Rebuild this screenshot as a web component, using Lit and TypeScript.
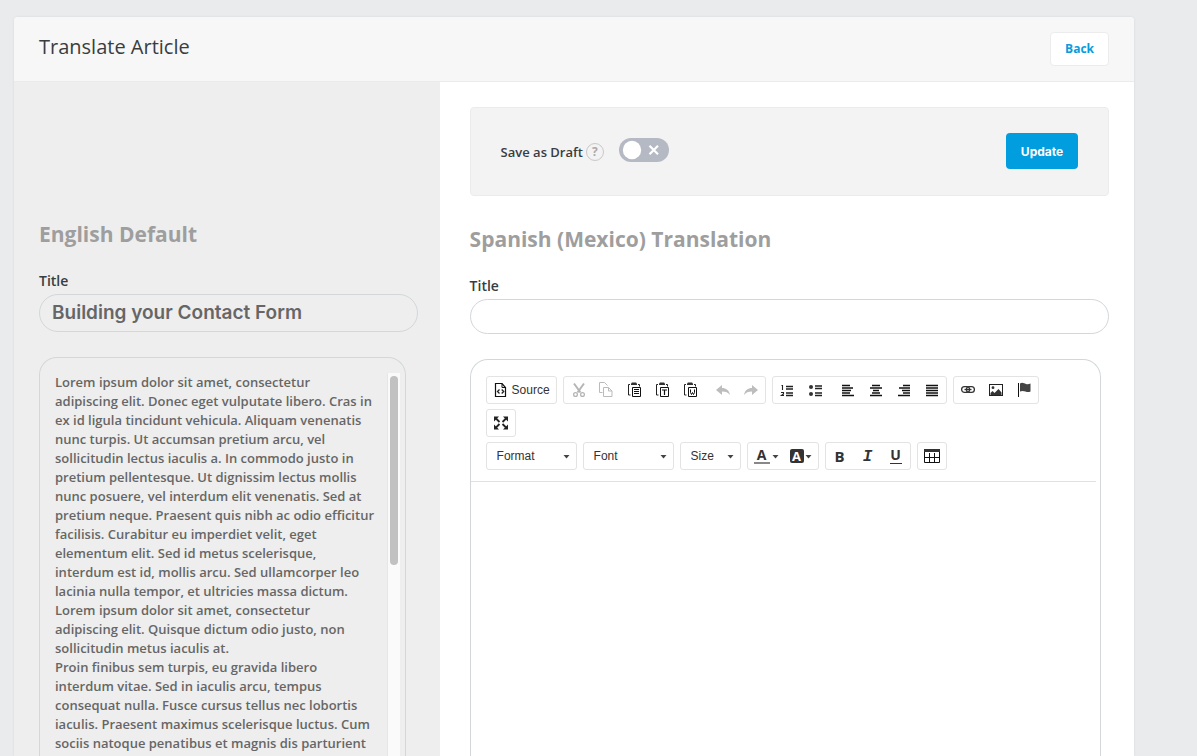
import { LitElement, html, css, svg } from "lit";
import { customElement, property } from "lit/decorators.js";

const glyphs: Record<string, unknown> = {
  source: svg`<path d="M2.500 1.500v13h10V5.500l-3.500-4z" fill="none" stroke="#111" stroke-width="1.200"/><path d="M9 1.500v4h4" fill="none" stroke="#111"/><path d="M6.500 7.500L4.500 9.500l2 2M8.700 7.500l2 2-2 2" fill="none" stroke="#222" stroke-width="1.300"/>`,
  cut: svg`<g fill="none" stroke="#b5b5b5"><path d="M4 1.500l6.500 9M14 1.500L7.500 10.500" stroke-width="2"/><circle cx="5.500" cy="12.500" r="1.900" stroke-width="1.300"/><circle cx="12.500" cy="12.500" r="1.900" stroke-width="1.300"/></g>`,
  copy: svg`<g fill="none" stroke="#bbb"><path d="M4.500 10.500h-3v-10h5l3 3"/><path d="M5.500 5.500h5l3.500 3.500v5.500h-8.500z"/><path d="M10.500 5.500v3.500h3.500"/></g>`,
  paste: svg`<path d="M4 2.500H2.500v10.500h2M12 2.500h1.500v2" fill="none" stroke="#222"/><path d="M6 .500h4l1 1V3H5V1.500z" fill="#333"/><path d="M6.500 5.500h8v9h-8z" fill="#fff" stroke="#111"/><path d="M8 7.500h5M8 9.500h5M8 11.500h5" stroke="#111"/>`,
  pasteText: svg`<path d="M4 2.500H2.500v10.500h2M12 2.500h1.500v2" fill="none" stroke="#222"/><path d="M6 .500h4l1 1V3H5V1.500z" fill="#333"/><path d="M6.500 5.500h8v9h-8z" fill="#fff" stroke="#111"/><path d="M8 8h5M10.500 8v5" stroke="#111" stroke-width="1.200"/>`,
  pasteWord: svg`<path d="M4 2.500H2.500v10.500h2M12 2.500h1.500v2" fill="none" stroke="#222"/><path d="M6 .500h4l1 1V3H5V1.500z" fill="#333"/><path d="M6.500 5.500h8v9h-8z" fill="#fff" stroke="#111"/><path d="M8.500 7.500v3l1 2 1-2 1 2 1-2v-3" fill="none" stroke="#111"/>`,
  undo: svg`<path d="M1 8l6-5v3c4 0 7 2 8 7-2-2.500-4-3.500-8-3.500V13z" fill="#bdbdbd"/>`,
  redo: svg`<path d="M15 8L9 3v3c-4 0-7 2-8 7 2-2.500 4-3.500 8-3.500V13z" fill="#bdbdbd"/>`,
  numbered: svg`<path d="M2.500 3.500h1v4.500M2 10.500h2.500v1.500L2.500 13.500H5" fill="none" stroke="#222" stroke-width="1.100"/><path d="M7 4.500h7M7 7h7M7 11h7M7 13.500h7" stroke="#222" stroke-width="1.300"/>`,
  bulleted: svg`<circle cx="4" cy="5" r="2" fill="#333"/><circle cx="4" cy="12" r="2" fill="#333"/><path d="M8 4h7M8 6.500h7M8 11h7M8 13.500h7" stroke="#222" stroke-width="1.300"/>`,
  left: svg`<path d="M2 3.500h8M2 6h11M2 8.500h9M2 11h8M2 13.500h12" stroke="#111" stroke-width="1.600"/>`,
  center: svg`<path d="M4 3.500h8M2 6h12M5 8.500h6M4 11h8M2 13.500h12" stroke="#111" stroke-width="1.600"/>`,
  right: svg`<path d="M7 3.500h7M3 6h11M6 8.500h8M7 11h7M2 13.500h12" stroke="#111" stroke-width="1.600"/>`,
  justify: svg`<path d="M2 3.500h12M2 6h12M2 8.500h12M2 11h12M2 13.500h12" stroke="#111" stroke-width="1.600"/>`,
  link: svg`<g fill="none" stroke="#333" stroke-width="1.300"><rect x="1.600" y="4.600" width="8" height="5.800" rx="2.900"/><rect x="6.400" y="4.600" width="8" height="5.800" rx="2.900"/><path d="M4.500 7.500h7"/></g>`,
  image: svg`<rect x="1.500" y="2.500" width="13" height="11" fill="#fff" stroke="#222"/><circle cx="5" cy="5.700" r="1.400" fill="#333"/><path d="M2.500 13v-2l2-2 2 2L10.500 7l3 3.500V13z" fill="#333"/>`,
  flag: svg`<path d="M2.500 1v14" stroke="#111"/><path d="M4 1.500c2.500-1.500 4 0 6 .5s3 0 4.500-.5v8c-2 1-3.500.5-5 0S6 8.500 4 9.500z" fill="#444"/>`,
  maximize: svg`<g fill="#222"><path d="M1 1.500h5L1 6.500zM15 1.500v5l-5-5zM1 14.500v-5l5 5zM15 14.500h-5l5-5z"/></g><path d="M3 3.500l3.500 3.500M13 3.500L9.500 7M3 12.500L6.500 9M13 12.500L9.500 9" stroke="#222" stroke-width="1.800"/>`,
  table: svg`<path d="M.500 1.500h15v13H.500zM.500 9.500h15M5.500 5v9.500M10.500 5v9.500" fill="none" stroke="#111"/><path d="M0 1h16v3H0z" fill="#333"/>`,
};

@customElement("tool-icon")
export class ToolIcon extends LitElement {
  @property() name = "";
  static styles = css`
    :host { display: block; width: 16px; height: 16px; }
    svg { display: block; }
  `;
  render() {
    return html`<svg width="16" height="16" viewBox="0 0 16 16" aria-hidden="true">${glyphs[this.name]}</svg>`;
  }
}

const caret = html`<svg class="caret" width="7" height="4" viewBox="0 0 7 4" aria-hidden="true"><path d="M.5 0h6l-3 3.500z" fill="#444" /></svg>`;

@customElement("editor-toolbar")
export class EditorToolbar extends LitElement {
  static styles = css`
    :host { display: flex; flex-direction: column; gap: 5px; padding: 16px 15px 11px; margin-right: 4px; border-bottom: 1px solid #dfe1e2; }
    .row { display: flex; gap: 6px; }
    .group { display: flex; box-sizing: border-box; height: 28px; border: 1px solid #e3e3e3; border-radius: 3px; background: #fff; }
    button { display: flex; align-items: center; gap: 3px; margin: 0; padding: 0 6px; border: 0; background: none; color: #333; font: 12px/16px "Liberation Sans", Arial, sans-serif; }
    .split { margin-left: 5px; }
    .combo { position: relative; display: flex; align-items: center; width: 89px; }
    .combo.small { width: 59px; }
    select { appearance: none; width: 100%; height: 26px; padding: 0 18px 0 10px; border: 0; background: none; color: #333; font: 12px/26px "Liberation Sans", Arial, sans-serif; }
    .combo .caret { position: absolute; right: 6px; top: 12px; pointer-events: none; }
    .color { gap: 2px; padding: 0 4px 0 6px; }
    .color + .color { padding: 0 6px 0 7px; gap: 1px; }
    .letter { box-sizing: border-box; width: 16px; height: 16px; font: bold 14px/14px "Open Sans", sans-serif; text-align: center; color: #333; }
    .fore { border-bottom: 2px solid #888; }
    .back { width: 14px; height: 14px; border-radius: 2px; background: #333; color: #fff; font-size: 13px; }
    .color .caret { margin-top: 1px; }
    .bold, .italic { font: bold 15px/16px "Open Sans", sans-serif; }
    .italic { font: italic bold 16px/18px "Liberation Mono", monospace; }
    .underline { width: 12px; margin: 0 2px; border-bottom: 1px solid #333; }
  `;
  private tool(name: string, label: string, split = false) {
    return html`<button class=${split ? "split" : ""} aria-label=${label}><tool-icon name=${name}></tool-icon></button>`;
  }
  private combo(label: string, small = false) {
    return html`<div class="group"><div class="combo ${small ? "small" : ""}">
      <select aria-label=${label}><option>${label}</option></select>${caret}</div></div>`;
  }
  render() {
    return html`
      <div class="row">
        <div class="group"><button><tool-icon name="source"></tool-icon>Source</button></div>
        <div class="group">
          ${this.tool("cut", "Cut")}${this.tool("copy", "Copy")}${this.tool("paste", "Paste")}
          ${this.tool("pasteText", "Paste as plain text")}${this.tool("pasteWord", "Paste from Word")}
          ${this.tool("undo", "Undo", true)}${this.tool("redo", "Redo")}
        </div>
        <div class="group">
          ${this.tool("numbered", "Numbered list")}${this.tool("bulleted", "Bulleted list")}
          ${this.tool("left", "Align left", true)}${this.tool("center", "Center")}
          ${this.tool("right", "Align right")}${this.tool("justify", "Justify")}
        </div>
        <div class="group">${this.tool("link", "Link")}${this.tool("image", "Image")}${this.tool("flag", "Anchor")}</div>
      </div>
      <div class="row"><div class="group">${this.tool("maximize", "Maximize")}</div></div>
      <div class="row">
        ${this.combo("Format")}${this.combo("Font")}${this.combo("Size", true)}
        <div class="group">
          <button class="color" aria-label="Text color"><span class="letter fore">A</span>${caret}</button>
          <button class="color" aria-label="Background color"><span class="letter back">A</span>${caret}</button>
        </div>
        <div class="group">
          <button aria-label="Bold"><span class="letter bold">B</span></button>
          <button aria-label="Italic"><span class="letter italic">I</span></button>
          <button aria-label="Underline"><span class="letter underline">U</span></button>
        </div>
        <div class="group">${this.tool("table", "Table")}</div>
      </div>`;
  }
}

@customElement("app-root")
export class AppRoot extends LitElement {
  static styles = css`
    :host { display: block; box-sizing: border-box; height: 100vh; overflow: hidden; padding: 17px 63px 0 14px; background: #eaebed; color: #383d42; font: 600 13px/19px "Open Sans", sans-serif; }
    * { box-sizing: border-box; }
    .card { display: flex; flex-direction: column; height: 100%; border-radius: 4px 4px 0 0; background: #fff; box-shadow: 0 0 3px rgba(0, 0, 0, 0.08); overflow: hidden; }
    header { display: flex; flex: none; justify-content: space-between; align-items: flex-start; height: 65px; padding: 15px 25px; background: #f7f7f7; border-bottom: 1px solid #ebebeb; }
    h1 { margin: 0; font-size: 20px; line-height: 30px; font-weight: 400; }
    h2 { margin: 0; font-size: 21px; line-height: 30px; font-weight: 700; color: #9e9e9e; }
    .back { height: 34px; padding: 0 14px; border: 1px solid #ececec; border-radius: 4px; background: #fff; color: #069ddd; font: 700 12px/32px "Open Sans", sans-serif; text-decoration: none; }
    .columns { display: grid; grid-template-columns: 38fr 62fr; flex: 1; min-height: 0; }
    .source { display: flex; flex-direction: column; min-height: 0; padding: 137px 22px 0 25px; background: #eee; }
    .target { display: flex; flex-direction: column; min-height: 0; padding: 25px 25px 0 30px; }
    .field { display: flex; flex-direction: column; margin-top: 22px; }
    .field label { line-height: 20px; padding-bottom: 3px; font-size: 14px; }
    input.text { width: 100%; height: 35px; padding: 0 12px; border: 1px solid #d3d7da; border-radius: 18px; background: transparent; color: #666; font: 600 19px/24px Inter, sans-serif; }
    .source input.text { height: 38px; padding-bottom: 2px; border-radius: 19px; }
    .article { display: flex; flex: 1; min-height: 0; margin: 25px 12px 0 0; padding: 15px 5px 0 15px; border: 1px solid #d3d7da; border-bottom: 0; border-radius: 18px 18px 0 0; color: #666; }
    .copy { flex: 1; overflow: hidden; padding-right: 12px; }
    .copy p { margin: 0; }
    .track { width: 13px; padding: 3px 2px 0; border-left: 1px solid #e6e6e6; background: #fafafa; }
    .thumb { width: 8px; height: 189px; border-radius: 4px; background: #c1c1c1; }
    .draft { display: flex; flex: none; justify-content: space-between; align-items: flex-start; height: 89px; margin-bottom: 28px; padding: 25px 30px; border: 1px solid #ebebeb; border-radius: 4px; background: #f3f3f3; }
    .setting { display: flex; align-items: center; height: 38px; }
    .help { width: 18px; height: 18px; margin: 0 15px 0 3px; padding: 0; border: 1px solid #c8c8c8; border-radius: 50%; background: none; color: #aaa; font: 700 12px/16px "Open Sans", sans-serif; text-align: center; }
    .switch { position: relative; display: block; width: 50px; height: 24px; margin-bottom: 4px; }
    .switch input { appearance: none; display: block; width: 50px; height: 24px; margin: 0; border-radius: 12px; background: #b4b9c3; }
    .switch svg { position: absolute; inset: 0; pointer-events: none; }
    .update { width: 72px; height: 36px; padding: 2px 0 0; border: 0; border-radius: 4px; background: #009ddf; color: #fff; font: 700 12px/34px Inter, sans-serif; }
    .editor { flex: 1; min-height: 0; margin: 25px 8px 0 0; border: 1px solid #d3d7da; border-bottom: 0; border-radius: 18px 18px 0 0; }
  `;
  render() {
    return html`
      <main class="card">
        <header><h1>Translate Article</h1><a class="back" href="#">Back</a></header>
        <div class="columns">
          <section class="source">
            <h2>English Default</h2>
            <div class="field">
              <label for="original">Title</label>
              <input class="text" id="original" readonly value="Building your Contact Form" />
            </div>
            <div class="article">
              <div class="copy">
                <p>Lorem ipsum dolor sit amet, consectetur adipiscing elit. Donec eget vulputate libero. Cras in ex id ligula tincidunt vehicula. Aliquam venenatis nunc turpis. Ut accumsan pretium arcu, vel sollicitudin lectus iaculis a. In commodo justo in pretium pellentesque. Ut dignissim lectus mollis nunc posuere, vel interdum elit venenatis. Sed at pretium neque. Praesent quis nibh ac odio efficitur facilisis. Curabitur eu imperdiet velit, eget elementum elit. Sed id metus scelerisque, interdum est id, mollis arcu. Sed ullamcorper leo lacinia nulla tempor, et ultricies massa dictum. Lorem ipsum dolor sit amet, consectetur adipiscing elit. Quisque dictum odio justo, non sollicitudin metus iaculis at.</p>
                <p>Proin finibus sem turpis, eu gravida libero interdum vitae. Sed in iaculis arcu, tempus consequat nulla. Fusce cursus tellus nec lobortis iaculis. Praesent maximus scelerisque luctus. Cum sociis natoque penatibus et magnis dis parturient</p>
              </div>
              <div class="track"><div class="thumb"></div></div>
            </div>
          </section>
          <section class="target">
            <div class="draft">
              <div class="setting">
                <label for="draft">Save as Draft</label>
                <button class="help" aria-label="Help">?</button>
                <span class="switch">
                  <input type="checkbox" id="draft" />
                  <svg width="50" height="24" viewBox="0 0 50 24" aria-hidden="true"><circle cx="13" cy="12" r="9.200" fill="#fff" /><path d="M30.500 7.700l8.500 8.600M39 7.700l-8.500 8.600" stroke="#fff" stroke-width="2.200" /></svg>
                </span>
              </div>
              <button class="update">Update</button>
            </div>
            <h2>Spanish (Mexico) Translation</h2>
            <div class="field">
              <label for="translated">Title</label>
              <input class="text" id="translated" />
            </div>
            <div class="editor"><editor-toolbar></editor-toolbar></div>
          </section>
        </div>
      </main>`;
  }
}
